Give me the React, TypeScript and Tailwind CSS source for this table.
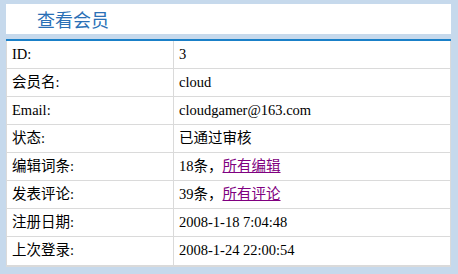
import React from 'react';

type Row = {
  label: string;
  value: React.ReactNode;
};

const rows: Row[] = [
  { label: 'ID:', value: '3' },
  { label: '会员名:', value: 'cloud' },
  { label: 'Email:', value: 'cloudgamer@163.com' },
  { label: '状态:', value: '已通过审核' },
  {
    label: '编辑词条:',
    value: (
      <>
        18条，
        <a href="#" className="text-[#800080] underline">
          所有编辑
        </a>
      </>
    ),
  },
  {
    label: '发表评论:',
    value: (
      <>
        39条，
        <a href="#" className="text-[#800080] underline">
          所有评论
        </a>
      </>
    ),
  },
  { label: '注册日期:', value: '2008-1-18 7:04:48' },
  { label: '上次登录:', value: '2008-1-24 22:00:54' },
];

export default function App() {
  return (
    <div className="w-[458px] h-[274px] bg-[#c6d9ec] pt-[4px] pl-[6px] pr-[7px] text-black">
      {/* Title bar */}
      <div className="h-[30px] bg-white flex items-center pl-[31px] text-[18px] leading-none text-[#2a70b6] font-[Noto_Sans_CJK_SC,sans-serif]">
        查看会员
      </div>
      <div className="mt-[5px] h-[2px] bg-[#1a80c8]" />

      {/* Member details */}
      <div className="bg-white border-x border-b-2 border-[#dadada] font-[Liberation_Serif,Noto_Sans_CJK_SC,serif]">
        {rows.map((row, i) => (
          <div
            key={row.label}
            className={`grid grid-cols-[167px_1fr] h-[28px] ${
              i < rows.length - 1 ? 'border-b border-[#dadada]' : ''
            }`}
          >
            <div className="flex items-center pl-[5px] border-r border-[#dadada] text-[14.5px]">
              {row.label}
            </div>
            <div className="flex items-center pl-[5px] text-[14.5px]">
              {row.value}
            </div>
          </div>
        ))}
      </div>
    </div>
  );
}
